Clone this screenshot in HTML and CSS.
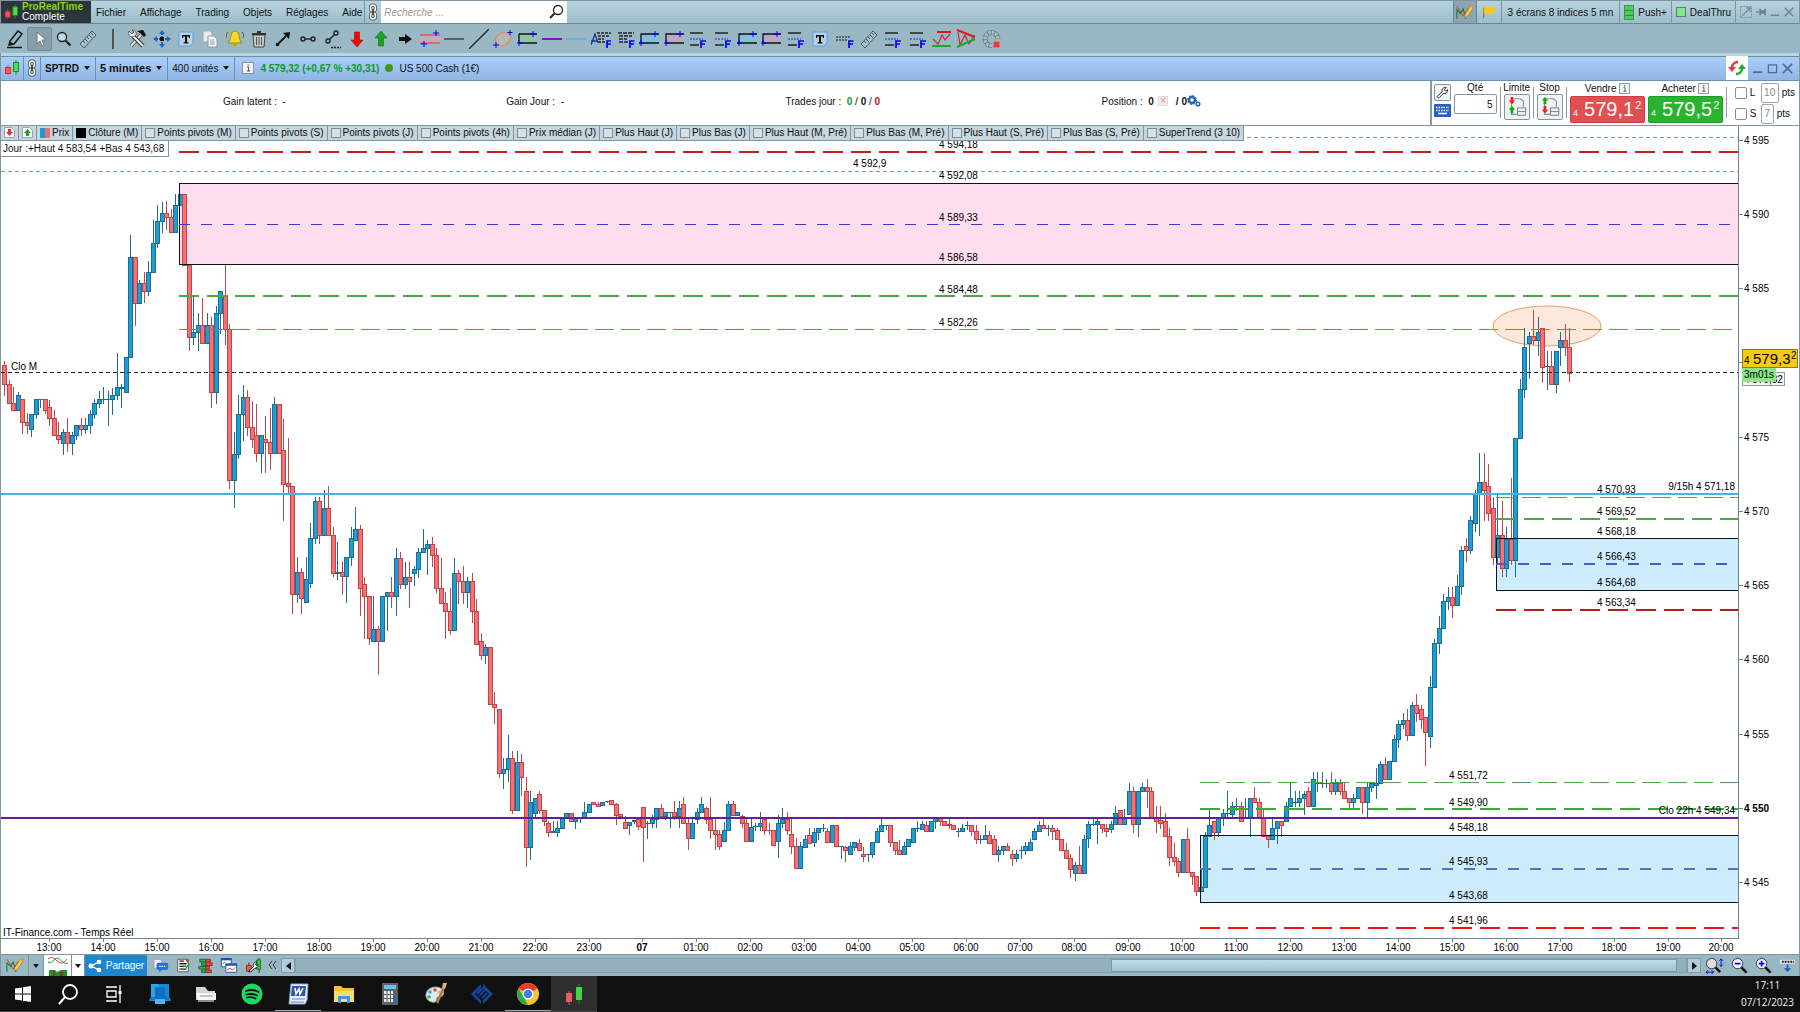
FILE: index.html
```
<!DOCTYPE html>
<html lang="fr">
<head>
    <meta charset="UTF-8">
    <title>ProRealTime Complete</title>
    <link rel="stylesheet" href="styles.css">
</head>
<body>
    <!-- icônes partagées -->
    <svg class="sprite" aria-hidden="true">
        <symbol id="i-candles" viewBox="0 0 16 16"><path d="M4 5v10" stroke="#c55"/><rect x="1.500" y="7.500" width="5" height="6" fill="#f25555" stroke="#c33"/><path d="M12 0v15" stroke="#2a8a2a"/><rect x="9.500" y="2.500" width="5" height="9" fill="#4ade4a" stroke="#2a8a2a"/></symbol>
        <symbol id="i-chain" viewBox="0 0 10 18"><g fill="none" stroke="#444" stroke-width="3"><rect x="2.500" y="2" width="5" height="6" rx="2.500"/><rect x="2.500" y="10" width="5" height="6" rx="2.500"/></g><g fill="none" stroke="#fff" stroke-width="1.500"><rect x="2.500" y="2" width="5" height="6" rx="2.500"/><rect x="2.500" y="10" width="5" height="6" rx="2.500"/></g><path d="M5 6v6" stroke="#444" stroke-width="2"/></symbol>
        <symbol id="i-search" viewBox="0 0 16 16"><circle cx="10" cy="6" r="4.500" fill="none" stroke="#222" stroke-width="1.300"/><path d="M6.500 9.500 2 14" stroke="#222" stroke-width="2"/></symbol>
        <symbol id="i-pencilchart" viewBox="0 0 20 18"><path d="M1 16V6l4 4 3-5 3 11" fill="none" stroke="#187a36" stroke-width="1.200"/><path d="M1 2l7 11 6-9" fill="none" stroke="#c33"/><path d="M9 15l1-4 6-9 3 2-6 9z" fill="#f9cf48" stroke="#a67a20" stroke-width=".7"/><path d="M16 2l3 2 1-2-2-1.500z" fill="#e88"/></symbol>
        <symbol id="i-flag" viewBox="0 0 18 18"><path d="M3 4v12" stroke="#8a7648" stroke-width="1.500"/><path d="M3 3c4-2 6 2 12-1v8c-5 3-8-1-12 1z" fill="#fdc81e"/></symbol>
        <symbol id="i-pen" viewBox="0 0 20 20"><path d="M4 16l1-4 8-10 4 3-8 10z" fill="none" stroke="#111" stroke-width="1.500"/><path d="M4 16l1.500-3.500 3 2.500z" fill="#111"/><path d="M2 18.500h15" stroke="#111" stroke-width="1.500"/></symbol>
        <symbol id="i-cursor" viewBox="0 0 20 20"><path d="M7 3v12l3-3 2 5 2-1-2-5h4z" fill="#f2f4f5" stroke="#777"/></symbol>
        <symbol id="i-loupe" viewBox="0 0 20 20"><circle cx="8" cy="8" r="4.500" fill="#c6dae2" stroke="#222" stroke-width="1.300"/><path d="M11.500 11.500l5 5" stroke="#222" stroke-width="2.200"/></symbol>
        <symbol id="i-ruler" viewBox="0 0 20 20"><path d="M2 15L14 2l4 4L6 19z" fill="#a9bfc9" stroke="#4d5a60"/><path d="M5 12l2 2M7 10l3 3M9 8l2 2M11 6l3 3M13 4l2 2" stroke="#4d5a60"/></symbol>
        <symbol id="i-bar" viewBox="0 0 20 20"><path d="M10 0v20" stroke="#333" stroke-width="1.500"/></symbol>
        <symbol id="i-tools" viewBox="0 0 20 20"><path d="M4 17L14 6" stroke="#555" stroke-width="4"/><path d="M4 17L14 6" stroke="#e4e4e4" stroke-width="2"/><path d="M10 2l6-1 3 5-2 2-4-4z" fill="#111"/><path d="M6 7l10 10" stroke="#333" stroke-width="4"/><path d="M6 7l10 10" stroke="#eee" stroke-width="2"/><path d="M2 2l3 3 2-2-2-2c3 0 5 2 4 5l-3 2c-3 0-5-2-4-6z" fill="#eee" stroke="#444" stroke-width=".8"/></symbol>
        <symbol id="i-move" viewBox="0 0 20 20"><path d="M10 1l3 4H7zM10 19l3-4H7zM1 10l4-3v6zM19 10l-4-3v6z" fill="#1b63c4"/><path d="M10 4v12M4 10h12" stroke="#1b63c4" stroke-width="2" stroke-dasharray="2 1"/><rect x="8" y="8" width="4" height="4" fill="#111"/></symbol>
        <symbol id="i-text" viewBox="0 0 20 20"><path d="M3 3h14v11l-3 3H3z" fill="#b6d2e2" stroke="#5a9ef0"/><path d="M6 6h8v3h-1l-.5-1.500H11V13l1.500.5v1h-5v-1L9 13V7.500H7.500L7 9H6z" fill="#111"/></symbol>
        <symbol id="i-copy" viewBox="0 0 20 20"><path d="M3 2h7l2 2v9H3z" fill="#e6ebed" stroke="#9aa"/><path d="M8 7h6l3 3v8H8z" fill="#f7f8f8" stroke="#899"/><path d="M10 11h4M10 13h5M10 15h5" stroke="#99a"/></symbol>
        <symbol id="i-bell" viewBox="0 0 20 20"><path d="M10 2c4 0 4 5 5 9l2 3H3l2-3c1-4 1-9 5-9z" fill="#f8d827" stroke="#8a7410" stroke-width=".8"/><circle cx="10" cy="15.500" r="2" fill="#c9a512"/><path d="M3 3C1 5 1 7 2 9M17 3c2 2 2 4 1 6" fill="none" stroke="#665a20"/></symbol>
        <symbol id="i-trash" viewBox="0 0 20 20"><path d="M4 6h12l-1 12H5z" fill="#c8c8c8" stroke="#444"/><path d="M7.500 8v8M10 8v8M12.500 8v8" stroke="#555"/><path d="M3 5h14M8 3h4" stroke="#333" stroke-width="1.800"/></symbol>
        <symbol id="i-arrowne" viewBox="0 0 20 20"><path d="M4 16l9-9" stroke="#111" stroke-width="1.800"/><path d="M17 3l-1 7-6-6z" fill="#111"/><circle cx="4.500" cy="15.500" r="1.800" fill="#111"/></symbol>
        <symbol id="i-segment" viewBox="0 0 20 20"><g fill="none" stroke="#222" stroke-width="1.400"><circle cx="5" cy="10" r="2"/><circle cx="15" cy="10" r="2"/><path d="M7 10h6"/></g></symbol>
        <symbol id="i-ray" viewBox="0 0 20 20"><g fill="none" stroke="#222" stroke-width="1.400"><circle cx="14" cy="4" r="2"/><circle cx="6" cy="12" r="2"/><path d="M7.500 10.500l5-5"/><path d="M9 18.500h10" stroke-dasharray="2 1"/></g></symbol>
        <symbol id="i-down" viewBox="0 0 20 20"><path d="M7.500 3h5v8H16l-6 7-6-7h3.500z" fill="#f00a0a" stroke="#900" stroke-width=".5"/></symbol>
        <symbol id="i-up" viewBox="0 0 20 20"><path d="M7.500 17h5V9H16l-6-7-6 7h3.500z" fill="#18a522" stroke="#060" stroke-width=".5"/></symbol>
        <symbol id="i-right" viewBox="0 0 20 20"><path d="M4 8h6V5l7 5-7 5v-3H4z" fill="#111"/></symbol>
        <symbol id="i-channel" viewBox="0 0 20 20"><path d="M0 6h20v8H0z" fill="#b8b2bd"/><path d="M0 6h20M0 14h20" stroke="#e25566" stroke-width="1.300"/><path d="M16 1v6M13 4h6M4 12v6M1 15h6" stroke="#00f"/></symbol>
        <symbol id="i-hline" viewBox="0 0 20 20"><path d="M0 10h20" stroke="#333" stroke-width="1.300"/></symbol>
        <symbol id="i-diag" viewBox="0 0 20 20"><path d="M0 20L20 0" stroke="#222" stroke-width="1.300"/></symbol>
        <symbol id="i-ellipse" viewBox="0 0 20 20"><ellipse cx="10" cy="10" rx="8" ry="6" transform="rotate(-25 10 10)" fill="#b5b8b4" stroke="#e58a5c" stroke-width="1.200"/><path d="M17 1v5M14.500 3.500h5M3 13v6M0 16h6" stroke="#00f"/></symbol>
        <symbol id="i-greenrect" viewBox="0 0 20 20"><path d="M2 5h18M2 14h18M2 5v9" stroke="#111" stroke-width="1.300"/><path d="M3 6h17v7H3z" fill="#8fc4a4"/><path d="M16 2v6M13 5h6M2 11v6M0 14h5" stroke="#00f"/></symbol>
        <symbol id="i-purple" viewBox="0 0 20 20"><path d="M0 10h20" stroke="#8013c0" stroke-width="2"/></symbol>
        <symbol id="i-cyan" viewBox="0 0 20 20"><path d="M0 10h20" stroke="#45b8ee" stroke-width="1.500"/></symbol>
        <symbol id="i-afib" viewBox="0 0 20 20"><path d="M0 16L4 5l3 9M0 12h6" fill="none" stroke="#123a90" stroke-width="1.300"/><path d="M6 4h14M7 7h12M7 10h6M7 13h8" stroke="#222" stroke-width="1.300" stroke-dasharray="3 1"/><path d="M16 19v-7h4M16 15h4" fill="none" stroke="#00f" stroke-width="1.700"/></symbol>
        <symbol id="i-gfib" viewBox="0 0 20 20"><path d="M3 4h16M4 7h13M4 10h8M4 13h9" stroke="#222" stroke-width="1.400" stroke-dasharray="4 1"/><path d="M15 19v-7h4.500M15 15h4" fill="none" stroke="#00f" stroke-width="1.700"/></symbol>
        <symbol id="i-fib" viewBox="0 0 20 20"><path d="M2 4h13M2 16h9" stroke="#222" stroke-width="1.400"/><path d="M2 10h13" stroke="#22f" stroke-dasharray="2 1"/><path d="M13 19v-7h5M13 15h4" fill="none" stroke="#00f" stroke-width="1.700"/></symbol>
        <symbol id="i-dfib" viewBox="0 0 20 20"><path d="M2 8h14M2 11h12" stroke="#444" stroke-width="1.600" stroke-dasharray="2 1"/><path d="M15 19v-7h4.500M15 15h4" fill="none" stroke="#00f" stroke-width="1.700"/></symbol>
        <symbol id="i-bluerect" viewBox="0 0 20 20"><path d="M2 5h18v9H2z" fill="#86bfdc"/><path d="M20 5H2v9h18M2 14H0" fill="none" stroke="#111" stroke-width="1.300"/><path d="M16 2v6M13 5h6M2 11v6M0 14h5" stroke="#00f"/></symbol>
        <symbol id="i-pinkrect" viewBox="0 0 20 20"><path d="M2 5h18v9H2z" fill="#b9a8c6"/><path d="M20 5H2v9h18" fill="none" stroke="#111" stroke-width="1.300"/><path d="M16 2v6M13 5h6M2 11v6M0 14h5" stroke="#00f"/></symbol>
        <symbol id="i-range" viewBox="0 0 20 20"><path d="M1 10l5 5 4-9 3 5 5-6" fill="none" stroke="#b33" stroke-width="1.200"/><path d="M5 3h14" stroke="#e01818" stroke-width="2"/><path d="M0 17h19" stroke="#1aa82a" stroke-width="2"/></symbol>
        <symbol id="i-wedge" viewBox="0 0 20 20"><path d="M2 3l2 13 5-10 4 9 5-8" fill="none" stroke="#b33" stroke-width="1.200"/><path d="M1 1l18 7" stroke="#e01818" stroke-width="2"/><path d="M1 18l18-8" stroke="#1aa82a" stroke-width="2"/></symbol>
        <symbol id="i-arc" viewBox="0 0 20 20"><path d="M11 16.500a6.500 6.500 0 1 1 6-6.500" fill="none" stroke="#6d7a80" stroke-width="5"/><path d="M11 16.500a6.500 6.500 0 1 1 6-6.500" fill="none" stroke="#a9bfc9" stroke-width="3.500" stroke-dasharray="2.500 1"/><path d="M13 13l5 5M18 13l-5 5" stroke="#e33" stroke-width="3"/></symbol>
        <symbol id="i-info" viewBox="0 0 12 12"><rect x=".5" y=".5" width="11" height="11" fill="#eef3f6" stroke="#8a979e"/><path d="M5 5h1.500v4M5 9h3" fill="none" stroke="#555"/><path d="M5.500 2.500h1.500v1H5.500z" fill="#555"/></symbol>
        <symbol id="i-refresh" viewBox="0 0 18 18"><path d="M4 9c0-4 3-6 6-6" fill="none" stroke="#e43b3b" stroke-width="2.500"/><path d="M0 8h8l-4 5z" fill="#e43b3b"/><path d="M14 9c0 4-3 6-6 6" fill="none" stroke="#19ae2f" stroke-width="2.500"/><path d="M10 10h8l-4-5z" fill="#19ae2f"/></symbol>
        <symbol id="i-min" viewBox="0 0 12 12"><path d="M1 10h10" stroke="currentColor" stroke-width="1.800"/></symbol>
        <symbol id="i-max" viewBox="0 0 12 12"><path d="M1.500 2h9v8.500h-9z" fill="none" stroke="currentColor" stroke-width="1.400"/></symbol>
        <symbol id="i-close" viewBox="0 0 12 12"><path d="M1 1l10 10M11 1L1 11" stroke="currentColor" stroke-width="1.800"/></symbol>
        <symbol id="i-pin" viewBox="0 0 12 12"><path d="M0 6h4" stroke="currentColor" stroke-width="1.500"/><path d="M4 2h2v2h4V2h2v8h-2V8H6v2H4z" fill="currentColor"/></symbol>
        <symbol id="i-wrench" viewBox="0 0 14 14"><path d="M1.500 11l5-4.500C6 3 8 1 11 1.500L9 4l1 1.500L12.500 4c.5 3-2 4.500-4.500 4l-4.500 4.500c-1 .8-2.800-.5-2-1.500z" fill="#fff" stroke="#222"/></symbol>
        <symbol id="i-keyboard" viewBox="0 0 17 13"><rect width="17" height="13" rx="1" fill="#2a5fc4"/><path d="M2 3.500h13M2 6.500h13" stroke="#fff" stroke-width="1.500" stroke-dasharray="1.500 1"/><path d="M4 9.500h9" stroke="#fff" stroke-width="1.500"/></symbol>
        <symbol id="i-limit" viewBox="0 0 24 24"><path d="M8 3h8l3 3v6M6 3v17h7" fill="none" stroke="#8a969c" stroke-width="1.300"/><path d="M5 1h3v4h2l-3.500 4L3 5h2z" fill="#e22"/><path d="M5 19h3v-4h2l-3.500-4L3 15h2z" fill="#1a1"/><path d="M12.500 13h9v8h-9zM12.500 17h9" fill="#f2f2f2" stroke="#6c787e"/></symbol>
        <symbol id="i-stop" viewBox="0 0 24 24"><path d="M8 3h8l3 3v6M6 3v17h7" fill="none" stroke="#8a969c" stroke-width="1.300"/><path d="M5 9h3V5h2L6.500 1 3 5h2z" fill="#1a1"/><path d="M5 11h3v4h2l-3.500 4L3 15h2z" fill="#e22"/><path d="M12.500 13h9v8h-9zM12.500 17h9" fill="#f2f2f2" stroke="#6c787e"/></symbol>
        <symbol id="i-gears" viewBox="0 0 14 12"><circle cx="5" cy="5" r="3" fill="none" stroke="#2a68b4" stroke-width="2.500"/><circle cx="5" cy="5" r="4.500" fill="none" stroke="#2a68b4" stroke-dasharray="2 1.500"/><circle cx="11" cy="9" r="1.800" fill="none" stroke="#2a68b4" stroke-width="1.500"/></symbol>
        <symbol id="i-wave" viewBox="0 0 20 20"><path d="M0 3c4-3 6-1 9 2s6 3 10-2" fill="none" stroke="#d33"/><path d="M0 6c4 3 6-4 9-4s6 7 11 5" fill="none" stroke="#1a9a30"/><path d="M1 14h6l2 2 4-2h6v6H1z" fill="#0e9a2c"/><path d="M5 15h2v5H5zM12 16h3v4h-3z" fill="#b12020"/></symbol>
        <symbol id="i-share" viewBox="0 0 14 14"><g fill="#fff"><circle cx="3" cy="7" r="2.500"/><circle cx="11" cy="3" r="2.300"/><circle cx="11" cy="11" r="2.300"/></g><path d="M11 3L3 7l8 4" fill="none" stroke="#fff" stroke-width="1.300"/></symbol>
        <symbol id="i-chat" viewBox="0 0 18 18"><path d="M1 2h7l2 2v8H1z" fill="#eef" stroke="#999"/><rect x="4" y="6" width="13" height="8" rx="2" fill="#2b6fd6"/><path d="M7 13v4l4-4z" fill="#2b6fd6"/><path d="M7 10h8" stroke="#fff" stroke-width="1.500" stroke-dasharray="1.500 1"/></symbol>
        <symbol id="i-news" viewBox="0 0 18 18"><path d="M3 2h12v14H3z" fill="#f4f4f4" stroke="#555"/><path d="M5 4h5M5 7h8M5 10h6M5 13h8" stroke="#222" stroke-width="1.500"/><path d="M11 2h4v5z" fill="#d33"/><path d="M11 9l2 2 3-4" stroke="#1a1" fill="none" stroke-width="1.500"/></symbol>
        <symbol id="i-book" viewBox="0 0 18 18"><path d="M2 2h7v3H2zM4 6h5v3H4zM1 10h8v3H1zM4 14h5v3H4z" fill="#2cb43c" stroke="#164"/><path d="M9 2h5v3H9zM9 6h7v3H9zM9 10h4v3H9zM9 14h6v3H9z" fill="#ea4a4a" stroke="#922"/></symbol>
        <symbol id="i-windows" viewBox="0 0 20 18"><path d="M1.500 1.500h11v9h-11z" fill="#fff" stroke="#1a4fae"/><path d="M1 2h12" stroke="#1a4fae" stroke-width="2.500"/><path d="M6.500 7.500h12v9h-12z" fill="#fff" stroke="#1a4fae"/><path d="M6 8h13" stroke="#1a4fae" stroke-width="2.500"/><path d="M8 14l3-2 3 2 3-3" fill="none" stroke="#d33"/><path d="M3 7l3-2" stroke="#1a1"/></symbol>
        <symbol id="i-cfg" viewBox="0 0 18 18"><path d="M15 1v16M4 6v10" stroke="#333"/><path d="M12.500 3h4v10h-4z" fill="#38d048" stroke="#171"/><path d="M1.500 9h5v6h-5z" fill="#f25555" stroke="#a22"/><path d="M4 15l5-5c-1-3 1-5 4-5l-2 3 1 1 2-1c0 3-2 4-4 4l-4 4z" fill="#fff" stroke="#111"/></symbol>
        <symbol id="i-zoomfit" viewBox="0 0 20 18"><circle cx="7" cy="7" r="5.500" fill="#ddd" stroke="#333"/><path d="M11 11l5 5" stroke="#111" stroke-width="2.500"/><path d="M17 2v8M15 4l2-2 2 2M15 8l2 2 2-2M1 16h8M3 14l-2 2 2 2M7 14l2 2-2 2" stroke="#00e" fill="none"/></symbol>
        <symbol id="i-zoomout" viewBox="0 0 18 18"><circle cx="7" cy="7" r="5.500" fill="#f4f4f4" stroke="#333"/><path d="M11 11l5.500 5.500" stroke="#111" stroke-width="2.800"/><path d="M4 7h6" stroke="#00e" stroke-width="1.800"/></symbol>
        <symbol id="i-zoomin" viewBox="0 0 18 18"><circle cx="7" cy="7" r="5.500" fill="#f4f4f4" stroke="#333"/><path d="M11 11l5.500 5.500" stroke="#111" stroke-width="2.800"/><path d="M4 7h6M7 4v6" stroke="#00e" stroke-width="1.800"/></symbol>
        <symbol id="i-dock" viewBox="0 0 18 18"><path d="M1 3h16v4H1z" fill="#eee"/><path d="M3 5h13" stroke="#222" stroke-width="2" stroke-dasharray="2 1"/><path d="M8 8h2v4h3l-4 4-4-4h3z" fill="#1c62c8"/></symbol>
    </svg>

    <div class="app">
        <header class="menubar">
            <div class="logo">
                <svg width="15" height="16"><use href="#i-candles"/></svg>
                <div><b>ProRealTime</b><span>Complete</span></div>
            </div>
            <nav>
                <a href="#">Fichier</a><a href="#">Affichage</a><a href="#">Trading</a><a href="#">Objets</a><a href="#">Réglages</a><a href="#">Aide</a>
            </nav>
            <span class="chain"><svg width="10" height="18"><use href="#i-chain"/></svg></span>
            <label class="search">
                <input type="text" placeholder="Recherche ..." aria-label="Recherche">
                <svg width="16" height="16"><use href="#i-search"/></svg>
            </label>
            <div class="status">
                <button class="tool on" aria-label="Analyse"><svg width="18" height="17"><use href="#i-pencilchart"/></svg></button>
                <button class="tool" aria-label="Alertes"><svg width="16" height="16"><use href="#i-flag"/></svg></button>
                <span class="cell wide">3 écrans 8 indices 5 mn</span>
                <span class="cell"><i class="led stack"></i>Push+</span>
                <span class="cell"><i class="led"></i>DealThru</span>
                <span class="cell wins">
                    <svg width="12" height="12"><rect x=".5" y=".5" width="11" height="11" fill="none" stroke="#7d929c" stroke-dasharray="2 1"/><path d="M2 10l8-8M6 2h4v4" stroke="#7d929c" stroke-width="1.500" fill="none"/></svg>
                    <svg width="10" height="10"><use href="#i-pin"/></svg>
                    <svg width="10" height="10"><use href="#i-min"/></svg>
                    <svg width="10" height="10"><use href="#i-close"/></svg>
                </span>
            </div>
        </header>

        <div class="toolbar" id="toolbar"></div>

        <div class="titlebar">
            <span class="cell"><svg width="16" height="16"><use href="#i-candles"/></svg></span>
            <span class="cell"><svg width="10" height="18"><use href="#i-chain"/></svg></span>
            <button class="cell drop"><b>SPTRD</b></button>
            <button class="cell drop period"><b>5 minutes</b></button>
            <button class="cell drop">400 unités</button>
            <div class="quote">
                <svg width="12" height="12"><use href="#i-info"/></svg>
                <b class="green">4 579,32 (+0,67 % +30,31)</b>
                <i class="dot"></i>
                <span>US 500 Cash (1€)</span>
            </div>
            <button class="refresh" aria-label="Actualiser"><svg width="18" height="18"><use href="#i-refresh"/></svg></button>
            <div class="winbtns">
                <svg width="11" height="11"><use href="#i-min"/></svg>
                <svg width="11" height="11"><use href="#i-max"/></svg>
                <svg width="11" height="11"><use href="#i-close"/></svg>
            </div>
        </div>

        <section class="panel">
            <div class="gains">
                <span>Gain latent : &nbsp;-</span>
                <span>Gain Jour : &nbsp;-</span>
                <span>Trades jour : &nbsp;<b class="green">0</b> / <b>0</b> / <b class="red">0</b></span>
                <span class="pos">Position :  <b>0</b><i class="mini">×</i><b>/ 0</b><svg width="14" height="12"><use href="#i-gears"/></svg></span>
            </div>
            <div class="order">
                <div class="col tools">
                    <button aria-label="Options"><svg width="13" height="13"><use href="#i-wrench"/></svg></button>
                    <svg width="17" height="13"><use href="#i-keyboard"/></svg>
                </div>
                <div class="col qty"><label for="qty">Qté</label><input id="qty" type="text" value="5"></div>
                <i class="sep"></i>
                <div class="col type"><span>Limite</span><button aria-label="Limite"><svg width="22" height="22"><use href="#i-limit"/></svg></button></div>
                <i class="sep"></i>
                <div class="col type"><span>Stop</span><button aria-label="Stop"><svg width="22" height="22"><use href="#i-stop"/></svg></button></div>
                <i class="sep"></i>
                <div class="col side"><span>Vendre <svg width="11" height="11"><use href="#i-info"/></svg></span><button class="price sell"><small>4</small>579,1<sup>2</sup></button></div>
                <div class="col side"><span>Acheter <svg width="11" height="11"><use href="#i-info"/></svg></span><button class="price buy"><small>4</small>579,5<sup>2</sup></button></div>
                <i class="sep"></i>
                <div class="col stops">
                    <div><input type="checkbox" id="ckL"><label for="ckL">L</label><input class="pts" type="text" value="10" aria-label="Limite en points">pts</div>
                    <div><input type="checkbox" id="ckS"><label for="ckS">S</label><input class="pts short" type="text" value="7" aria-label="Stop en points">pts</div>
                </div>
            </div>
        </section>

        <main class="chart">
            <svg id="plot"></svg>
            <div class="legend">
                <span class="ico"><svg width="11" height="11"><path d="M.5.5h7l3 3v7H.500z" fill="#fff" stroke="#99a5ab"/><path d="M4 2h3v3h2L5.500 9 2 5h2z" fill="#d33"/></svg></span>
                <span class="ico"><svg width="11" height="11"><path d="M.5.5h7l3 3v7H.500z" fill="#fff" stroke="#99a5ab"/><path d="M4 9h3V6h2L5.500 2 2 6h2z" fill="#1a1"/></svg></span>
                <span><i class="sw duo"></i>Prix</span>
                <span><i class="sw"></i>Clôture (M)</span>
                <label><input type="checkbox">Points pivots (M)</label>
                <label><input type="checkbox">Points pivots (S)</label>
                <label><input type="checkbox">Points pivots (J)</label>
                <label><input type="checkbox">Points pivots (4h)</label>
                <label><input type="checkbox">Prix médian (J)</label>
                <label><input type="checkbox">Plus Haut (J)</label>
                <label><input type="checkbox">Plus Bas (J)</label>
                <label><input type="checkbox">Plus Haut (M, Pré)</label>
                <label><input type="checkbox">Plus Bas (M, Pré)</label>
                <label><input type="checkbox">Plus Haut (S, Pré)</label>
                <label><input type="checkbox">Plus Bas (S, Pré)</label>
                <label><input type="checkbox">SuperTrend (3 10)</label>
            </div>
            <div class="day">Jour :+Haut 4 583,54 +Bas 4 543,68</div>
        </main>

        <footer class="bottombar">
            <button class="b28" aria-label="Dessin"><svg width="18" height="17"><use href="#i-pencilchart"/></svg></button>
            <button class="arrow" aria-label="Menu dessin"></button>
            <button class="b28 white" aria-label="Indicateurs"><svg width="20" height="20"><use href="#i-wave"/></svg></button>
            <button class="arrow white" aria-label="Menu indicateurs"></button>
            <button class="share"><svg width="14" height="14"><use href="#i-share"/></svg>Partager</button>
            <div class="mini-icons">
                <svg width="16" height="17"><use href="#i-chat"/></svg>
                <svg width="16" height="17"><use href="#i-news"/></svg>
                <svg width="16" height="17"><use href="#i-book"/></svg>
                <svg width="18" height="17"><use href="#i-windows"/></svg>
                <svg width="17" height="17"><use href="#i-cfg"/></svg>
                <svg width="9" height="9"><path d="M4 0L1 4l3 4M8 0L5 4l3 4" fill="none" stroke="#333"/></svg>
            </div>
            <button class="scroll-btn" aria-label="Gauche"><svg width="5" height="8"><path d="M5 0v8L0 4z" fill="#111"/></svg></button>
            <div class="track"><div class="thumb"></div></div>
            <button class="scroll-btn" aria-label="Droite"><svg width="5" height="8"><path d="M0 0v8l5-4z" fill="#111"/></svg></button>
            <div class="zooms">
                <svg width="19" height="17"><use href="#i-zoomfit"/></svg>
                <svg width="17" height="17"><use href="#i-zoomout"/></svg>
                <svg width="17" height="17"><use href="#i-zoomin"/></svg>
                <svg width="17" height="17"><use href="#i-dock"/></svg>
            </div>
        </footer>
    </div>

    <div class="taskbar">
        <button aria-label="Démarrer"><svg width="16" height="16"><path d="M0 2.500l7-1v6H0zM8 1.300L16 0v7.500H8zM0 8.500h7v6l-7-1zM8 8.500h8V16l-8-1.300z" fill="#fff"/></svg></button>
        <button aria-label="Rechercher"><svg width="22" height="22"><circle cx="13" cy="9" r="7" fill="none" stroke="#fff" stroke-width="1.800"/><path d="M8 14l-6 7" stroke="#fff" stroke-width="2"/></svg></button>
        <button aria-label="Vue des tâches"><svg width="16" height="18"><path d="M1 2h9M1 6h9v6H1zM1 16h9M1 1v2M10 1v2M1 15v2M10 15v2M14 0v18" fill="none" stroke="#fff" stroke-width="1.300"/><path d="M12.500 6h3v3h-3z" fill="#fff"/></svg></button>
        <button aria-label="Bureau"><svg width="22" height="22"><path d="M2 1h18v13l2 4H0l2-4z" fill="#1687d8"/><path d="M2 1h8v13H2z" fill="#2aa3ea"/><path d="M0 17l2-3h18l2 3z" fill="#1478c6"/><path d="M6 4h10v17H6z" fill="#0f6fc0"/><path d="M6 16h10v5H6z" fill="#4db5ee"/></svg></button>
        <button aria-label="Imprimante"><svg width="22" height="18"><path d="M1 2h9l3 4h7v9H1z" fill="#d5d5d5"/><path d="M1 8h20v7H3z" fill="#f5f5f5"/><path d="M3 15h16v2H3z" fill="#888"/><path d="M5 11h13" stroke="#999"/></svg></button>
        <button aria-label="Spotify"><svg width="22" height="22"><circle cx="11" cy="11" r="10.500" fill="#1ed760"/><path d="M5 8c4-1.500 9-1 12.500 1M5.500 11.500c4-1 7.500-.5 10.500 1M6 14.500c3-.8 6-.5 8.500 1" fill="none" stroke="#111" stroke-width="1.800" stroke-linecap="round"/></svg></button>
        <button class="open" aria-label="Word"><svg width="22" height="22"><path d="M4 1h17l-1 16-2 4H2z" fill="#e8eefb" stroke="#8aa5d8"/><path d="M5 16h13M4 19h13" stroke="#5b85cf"/><path d="M5 3h14l-1 10H4z" fill="#2b57ac"/><path d="M8 5l1 6 3-5 1 5 3-6" fill="none" stroke="#fff" stroke-width="1.600"/></svg></button>
        <button aria-label="Explorateur"><svg width="22" height="22"><path d="M1 3h7l2 2h11v14H1z" fill="#f7bc3c"/><path d="M1 8h20v11H1z" fill="#ffd877"/><path d="M5 20v-7h12v7h-3v-4H8v4z" fill="#3e9be0"/></svg></button>
        <button aria-label="Calculatrice"><svg width="18" height="22"><path d="M1 0h16v22H1z" fill="#5a6368"/><path d="M3 2h12v4H3z" fill="#62c4ec"/><path d="M3 9.500h9M3 13.500h9M3 17.500h9" stroke="#e6e6e6" stroke-width="3" stroke-dasharray="2.500 1"/><path d="M13 12h2v7h-2z" fill="#1a6fc0"/></svg></button>
        <button aria-label="Paint"><svg width="24" height="22"><path d="M11 4c7 0 10 4 8 8-2 3-5 0-6 3s-1 5-5 4C-1 17 0 5 11 4z" fill="#dfe8ee" stroke="#8fa6b5"/><circle cx="6" cy="9" r="1.800" fill="#3ba3e8"/><circle cx="11" cy="7" r="1.800" fill="#e94f3d"/><circle cx="5" cy="14" r="1.800" fill="#48b04a"/><circle cx="15" cy="9" r="1.600" fill="#f3b62b"/><path d="M13 20L20 4" stroke="#b77a37" stroke-width="2.500"/><path d="M19 0h4l-2 6-3-1z" fill="#e3b56d"/></svg></button>
        <button aria-label="IG"><svg width="22" height="22"><path d="M10 1L0 11l10 10v-4l-6-6 6-6zM12 1l10 10-10 10v-4l6-6-6-6z" fill="#17439b"/><path d="M6 11l8-8M8 13l6-6M11 15l5-5" stroke="#17439b" stroke-width="2"/></svg></button>
        <button class="open" aria-label="Chrome"><svg width="22" height="22"><circle cx="11" cy="11" r="11" fill="#f7c52c"/><path d="M11 11L1.500 5.500A11 11 0 0 1 20.500 5.500z" fill="#e33b2e"/><path d="M1.500 5.500L7 14l4 8A11 11 0 0 1 1.500 5.500z" fill="#2da94f"/><circle cx="11" cy="11" r="5.500" fill="#fff"/><circle cx="11" cy="11" r="4.300" fill="#3f7fee"/></svg></button>
        <button class="active" aria-label="ProRealTime"><svg width="20" height="22"><path d="M5 8v14" stroke="#c55"/><path d="M15 1v20" stroke="#2a8a2a"/><path d="M2 10h6v9H2z" fill="#e85c60"/><path d="M12 4h6v13h-6z" fill="#3fd648"/></svg></button>
        <div class="clock"><span>17:11</span><span>07/12/2023</span></div>
    </div>

    <script src="chart.js"></script>
</body>
</html>
```

FILE: styles.css
```
* { box-sizing: border-box; }
body { margin: 0; height: 100vh; display: flex; flex-direction: column; font-family: "Liberation Sans", Arial, sans-serif; font-size: 10px; color: #111; overflow: hidden; background: #fff; }
button, input { font: inherit; color: inherit; }
button { border: 0; padding: 0; background: none; display: flex; align-items: center; justify-content: center; }
a { color: inherit; text-decoration: none; }
svg { display: block; flex: none; }
.sprite { position: absolute; width: 0; height: 0; }
.green { color: #0c9a20; }
.red { color: #c01818; }

.app { flex: 1; min-height: 0; display: flex; flex-direction: column; border: 1px solid #7f959f; border-bottom: 0; }

/* menu */
.menubar { height: 23px; display: flex; background: linear-gradient(#b6d3df, #9dbdca); border-bottom: 1px solid #6d8691; }
.logo { width: 90px; display: flex; align-items: center; gap: 3px; padding-left: 3px; background: #2c353b; color: #fff; }
.logo b, .logo span { display: block; line-height: 10px; }
.logo b { color: #86d41c; }
nav { display: flex; align-items: center; gap: 14px; padding: 0 2px 0 5px; }
.chain { width: 17px; display: flex; align-items: center; justify-content: center; border-left: 1px solid #7c949f; }
.search { width: 186px; display: flex; align-items: center; background: #fff; padding: 0 3px; }
.search input { flex: 1; min-width: 0; border: 0; outline: 0; padding: 0; }
.search input::placeholder { color: #999; font-style: italic; }
.status { margin-left: auto; display: flex; }
.status .tool { width: 24px; }
.status .on { background: #8ba6b2; border-left: 1px solid #6d8691; border-right: 1px solid #6d8691; }
.cell { display: flex; align-items: center; border-left: 1px solid #7c949f; padding: 0 4px; gap: 4px; }
.status .wide { padding: 0 6px; }
.wins { padding-right: 5px; color: #6d828c; }
.led { width: 10px; height: 10px; background: #86e48c; border: 1px solid #4f8a60; }
.stack { height: 15px; background: repeating-linear-gradient(#47cf52 0 4px, #2c8c39 4px 5px); }

/* outils de dessin */
.toolbar { height: 29px; flex: none; display: grid; grid-template-columns: repeat(41, minmax(0, 1fr)); width: 1002px; padding-left: 2px; align-items: center; background: #9ab8c4; box-shadow: 0 0 0 100vmax #9ab8c4; clip-path: inset(0 -100vmax 0 -2px); }
.toolbar button { height: 24px; }
.toolbar .on { background: #86a0ab; border: 1px solid #728b96; border-radius: 2px; }

/* titre du graphique */
.titlebar { height: 28px; flex: none; display: flex; border-top: 3px solid #bdd5de; border-bottom: 1px solid #6c8fb5; background: linear-gradient(#abcffa, #8fb6e4); box-shadow: inset 0 1px #6c8fa8; }
.titlebar .cell { padding: 0 3px; border-left: 0; border-right: 1px solid #6c8fb5; }
.titlebar .drop { padding: 0 5px 0 4px; gap: 5px; }
.drop::after, .arrow::after { content: ""; border: 3px solid transparent; border-top: 4px solid #111; border-bottom: 0; }
.period { font-size: 11px; }
.quote { display: flex; align-items: center; gap: 6px; padding-left: 7px; flex: 1; }
.dot { width: 8px; height: 8px; border-radius: 50%; background: #3f9a10; }
.refresh { width: 22px; background: #fff; }
.winbtns { display: flex; align-items: center; gap: 4px; padding: 0 6px 0 4px; color: #4b6d9c; }

/* bandeau ordres */
.panel { height: 45px; flex: none; display: flex; background: #fff; border-bottom: 1px solid #7f959f; }
.gains { flex: 1; display: grid; grid-template-columns: 284fr 280fr 317fr 329fr; padding: 0 0 4px 222px; align-items: center; }
.pos { display: flex; align-items: center; white-space: pre; }
.mini { width: 10px; height: 10px; margin: 0 8px 0 4px; line-height: 8px; text-align: center; border: 1px solid #ddd; background: #fdeaea; color: #e88; }
.order { display: flex; gap: 3px; padding-left: 2px; border-left: 2px solid #8b9aa1; }
.col { display: flex; flex-direction: column; align-items: center; line-height: 13px; white-space: nowrap; }
.tools { padding-top: 3px; gap: 3px; }
.tools button { width: 17px; height: 17px; border: 1px solid #8795a0; border-radius: 2px; background: #f2f5f6; }
.qty { width: 43px; }
.qty input { width: 100%; height: 20px; border: 1px solid #8795a0; border-radius: 2px; text-align: right; padding: 0 3px; }
.sep { width: 1px; height: 31px; margin-top: 6px; background: #8b9aa1; }
.type { width: 26px; }
.type button { width: 26px; height: 26px; border: 1px solid #8795a0; border-radius: 2px; background: #f0f3f4; }
.side { width: 75px; }
.side span { display: flex; align-items: center; gap: 2px; line-height: 15px; }
.price { width: 100%; height: 27px; border-radius: 2px; color: #fff; font-size: 20px; align-items: baseline; line-height: 25px; }
.price small { font-size: 9px; margin-right: 6px; }
.price sup { font-size: 11px; line-height: 17px; align-self: flex-start; margin-left: 1px; }
.sell { background: #e24f52; border: 1px solid #ca3f42; }
.buy { background: #2ab32e; border: 1px solid #1f9c24; }
.stops { padding: 1px 4px 0 5px; align-items: flex-start; gap: 0; }
.stops div { display: flex; align-items: center; height: 21px; gap: 3px; }
.stops label { width: 8px; }
.stops input[type=checkbox], .legend input { appearance: none; margin: 0; width: 12px; height: 12px; border: 1px solid #7f8e96; background: #fff; }
.stops input[type=checkbox] { border-radius: 2px; }
.stops .pts { width: 18px; height: 20px; padding: 0; text-align: center; border: 1px solid #9aa6ad; border-radius: 2px; color: #888; }
.stops .short { width: 13px; }

/* graphique */
.chart { flex: 1; min-height: 0; position: relative; }
#plot { width: 100%; height: 100%; font-size: 10px; }
.legend { position: absolute; top: 0; left: 0; display: flex; height: 15px; background: #c5d6de; border-bottom: 1px solid #7f959f; white-space: nowrap; line-height: 12px; }
.legend > * { display: flex; align-items: center; gap: 2px; padding: 0 3px 1px; border-right: 1px solid #7f959f; }
.legend input { width: 10px; height: 10px; background: #d5e1e7; }
.sw { width: 10px; height: 10px; background: #000; }
.duo { background: linear-gradient(90deg, #1a9bd0 50%, #f36c6c 50%); }
.day { position: absolute; top: 15px; left: 0; height: 16px; line-height: 15px; padding: 0 4px 0 2px; background: #fff; border: 1px solid #7f959f; border-width: 0 1px 1px 0; }

/* barre du bas */
.bottombar { height: 22px; flex: none; display: flex; background: #9ab8c4; border-top: 1px solid #7f959f; }
.b28 { width: 28px; border-right: 1px solid #7c949f; overflow: hidden; }
.arrow { width: 15px; border-right: 1px solid #7c949f; }
.white { background: #fff; width: 28px; }
.arrow.white { width: 13px; }
.share { width: 62px; background: #1f87d0; color: #fff; gap: 4px; }
.mini-icons { width: 134px; display: flex; align-items: center; justify-content: space-between; padding: 0 4px 0 6px; }
.scroll-btn { width: 14px; margin: 3px 0; background: #b3cdd8; border: 1px solid #7f9aa6; }
.track { flex: 1; display: flex; margin: 3px 0; padding-right: 9px; background: #93b0bc; border: 1px solid #84a0ab; }
.thumb { margin-left: 59%; flex: 1; background: linear-gradient(#bfdde7, #9fc3d1); border: 1px solid #7f9aa6; }
.zooms { display: flex; align-items: center; gap: 7px; padding: 0 3px 0 4px; }

/* barre des tâches */
.taskbar { height: 36px; flex: none; display: flex; background: #101010; }
.taskbar button { width: 46px; border-bottom: 1px solid #444; }
.taskbar button:first-child { width: 45px; }
.taskbar .open { box-shadow: inset 0 -1px #9ab; }
.taskbar .active { background: #2f2f2f; }
.clock { margin-left: auto; padding-right: 6px; display: flex; flex-direction: column; justify-content: center; align-items: center; color: #f0f0f0; font-family: "Open Sans", sans-serif; line-height: 17px; }
```

FILE: chart.js
```
// barre d'outils
const tools = ['pen', 'cursor', 'loupe', 'ruler', 'bar', 'tools', 'move', 'text', 'copy', 'bell', 'trash', 'arrowne', 'segment', 'ray',
    'down', 'up', 'right', 'channel', 'hline', 'diag', 'ellipse', 'greenrect', 'purple', 'cyan', 'afib', 'gfib', 'bluerect', 'pinkrect',
    'fib', 'fib', 'bluerect', 'pinkrect', 'fib', 'text', 'dfib', 'ruler', 'fib', 'fib', 'range', 'wedge', 'arc'];
document.getElementById('toolbar').innerHTML = tools.map(t =>
    `<button class="${t === 'cursor' ? 'on' : ''}" aria-label="${t}"><svg width="20" height="20"><use href="#i-${t}"/></svg></button>`).join('');

// bougies 5 min : sens, mèche haute, haut du corps, bas du corps, mèche basse
const bars = `d 361 365 384 395,d 380 384 403 403,d 387 403 410 410,u 392 395 410 410,d 399 399 422 433,d 413 422 425 433,u 414 414 429 436,u 399 399 414 418,u 399 399 399 407,d 399 399 410 413,
d 400 407 418 425,d 410 418 435 435,d 422 435 439 443,u 429 432 443 454,d 418 432 443 451,u 432 435 443 454,u 425 425 435 439,d 418 425 429 435,u 418 425 429 433,u 410 414 425 433,
u 399 403 414 418,u 391 399 403 407,u 387 399 399 403,u 391 399 399 425,u 388 395 399 414,u 353 387 395 399,u 384 387 388 407,u 357 357 392 392,u 235 257 357 357,d 257 257 303 325,
u 280 283 303 303,d 272 283 291 302,u 261 272 291 295,u 220 243 272 272,u 205 221 243 247,u 202 213 221 232,d 201 213 217 229,d 209 217 232 232,u 194 205 232 232,u 194 194 205 205,
d 194 194 265 265,d 265 265 337 350,u 295 332 337 344,u 313 325 332 350,d 298 325 343 343,u 313 325 343 343,d 317 325 392 407,u 306 313 392 403,u 291 291 313 333,d 265 295 329 344,
d 324 329 480 488,u 432 454 480 507,u 395 414 454 458,u 385 397 414 440,d 390 397 427 435,d 401 427 439 447,d 404 435 453 461,u 435 435 453 472,d 416 439 442 472,d 408 442 453 469,
u 397 404 453 453,d 404 404 453 453,d 419 450 484 520,d 438 483 486 492,d 486 486 594 613,u 557 572 594 602,d 568 572 598 613,u 557 579 602 602,u 523 538 583 587,u 497 501 538 543,
d 497 501 535 543,u 490 508 535 535,d 486 508 535 535,d 527 535 573 576,u 542 572 573 579,d 561 572 576 594,u 557 557 576 602,u 527 538 557 565,u 507 529 540 540,d 525 529 588 615,
d 577 584 596 638,d 596 596 638 644,u 596 629 641 641,d 626 629 641 674,u 596 596 641 641,u 592 592 596 630,d 577 592 596 607,u 548 558 596 615,d 552 558 584 588,u 562 577 584 588,
d 562 577 581 607,u 566 569 573 585,u 548 552 569 577,u 529 548 552 552,u 540 544 548 574,d 537 544 555 566,d 548 555 588 592,d 558 588 603 603,d 592 603 611 638,d 588 611 630 634,
u 558 573 630 630,d 570 573 581 603,d 566 581 592 603,u 577 581 592 607,d 573 581 611 622,d 599 611 644 644,d 633 641 655 659,u 644 647 655 663,d 647 647 704 704,d 692 704 707 723,
d 709 709 773 777,u 758 769 773 788,u 735 758 769 781,d 751 758 810 813,u 751 762 810 810,d 754 762 777 795,d 777 791 847 866,u 791 802 847 859,u 798 798 813 817,d 791 794 810 813,
d 810 810 821 825,d 821 823 832 836,u 821 831 832 832,u 821 828 832 836,u 818 818 828 828,u 813 813 818 818,d 813 813 821 821,u 818 818 821 828,u 818 818 818 822,u 802 812 817 817,
u 804 804 812 812,d 802 802 804 804,d 802 804 806 806,u 802 802 805 805,u 801 801 801 802,d 800 800 804 804,d 803 804 815 824,d 814 814 816 816,d 816 822 828 828,u 822 822 825 834,
u 820 820 821 823,d 818 819 826 829,d 807 807 827 861,u 821 823 823 838,u 815 819 823 827,u 808 808 819 827,d 804 808 816 816,u 812 812 816 819,u 812 812 812 827,d 801 812 816 819,
u 801 808 816 827,d 797 804 823 823,d 819 823 838 849,u 819 823 838 838,u 808 812 819 823,u 797 804 812 812,d 807 808 819 823,d 797 819 830 838,d 819 830 834 849,d 830 834 846 849,
u 822 830 841 841,u 801 804 830 830,d 801 804 815 815,u 812 812 815 815,d 815 816 823 827,d 819 823 841 841,u 819 827 841 841,u 823 826 826 830,u 812 823 826 830,d 817 819 830 834,
d 823 830 830 834,d 830 830 845 845,u 815 823 841 857,u 808 819 823 827,d 812 819 830 834,d 819 834 846 853,d 838 846 868 868,u 842 846 868 868,u 835 839 847 847,d 828 835 843 843,
u 828 832 842 846,u 828 828 832 839,u 824 828 828 831,d 828 831 842 842,u 825 825 842 842,d 825 825 846 846,u 846 846 846 858,d 846 847 850 861,u 842 846 854 854,u 842 842 847 850,
d 839 843 850 850,d 847 854 856 861,u 854 854 854 861,u 842 842 854 857,u 828 831 842 842,u 818 825 831 831,u 825 825 825 829,d 825 825 842 846,d 842 842 850 854,d 840 850 854 854,
u 842 846 854 854,u 839 839 846 846,u 828 828 842 842,u 821 828 828 831,u 821 824 829 829,d 821 825 831 831,u 821 821 831 831,u 817 817 821 828,d 818 818 821 825,d 821 821 825 825,
d 817 824 825 828,d 825 825 829 829,u 828 831 831 836,u 824 828 831 831,u 821 825 825 829,d 825 825 831 835,d 825 831 839 843,u 835 839 839 843,u 825 835 839 839,d 831 835 843 843,
d 835 839 854 854,u 846 850 854 861,u 846 846 850 854,d 843 846 850 850,d 850 854 858 865,u 850 854 858 861,u 846 850 850 858,u 842 846 850 854,u 839 842 850 850,u 828 831 839 839,
u 821 825 831 831,d 817 825 828 828,u 825 828 828 835,d 825 828 831 839,d 828 830 839 839,d 839 839 850 850,d 843 850 858 858,d 854 858 869 877,u 862 865 873 880,d 846 865 873 873,
u 835 839 873 873,u 821 824 838 847,u 818 824 824 825,u 817 821 824 843,d 824 824 828 832,d 824 828 831 836,u 821 824 829 832,u 806 813 824 824,d 810 810 824 824,u 809 817 824 824,
u 783 791 814 814,d 787 791 824 832,u 791 791 824 836,u 783 787 791 791,d 779 787 791 807,d 787 791 817 817,d 806 817 821 832,d 806 820 823 828,d 813 821 836 836,d 828 836 857 865,
d 843 857 861 865,d 858 861 872 876,u 839 839 872 872,d 828 839 872 872,d 872 872 876 884,d 876 876 891 895,u 870 887 891 891,u 832 836 887 887,u 810 825 836 836,d 821 821 832 839,
u 817 817 832 836,u 809 813 817 825,u 791 813 813 817,u 802 806 814 817,u 798 806 806 810,d 802 806 821 821,u 798 817 817 817,u 798 798 817 836,d 787 798 802 802,d 798 802 817 817,
d 809 817 836 836,d 836 836 839 847,u 817 828 839 839,u 821 821 828 843,d 821 821 825 836,u 802 806 821 821,u 783 798 806 806,u 791 802 802 806,u 791 798 802 806,u 791 794 798 814,
d 787 791 806 806,u 772 779 806 806,u 772 783 783 791,u 772 783 783 787,u 779 783 783 787,d 772 783 791 794,u 779 783 791 794,d 779 783 791 794,d 783 791 798 798,d 798 798 802 809,
u 794 798 802 809,u 787 787 798 798,d 787 787 802 813,u 783 787 802 817,u 783 783 787 791,u 768 783 785 798,u 761 764 783 783,d 757 764 779 779,u 761 761 779 779,u 735 739 761 761,
u 720 724 739 747,u 713 720 724 728,d 709 720 735 740,u 702 705 735 735,d 694 705 713 721,d 705 709 719 728,d 717 717 732 765,u 676 687 736 747,u 639 643 687 687,u 616 628 643 653,
u 594 601 628 628,u 587 597 601 609,d 587 597 605 617,u 575 586 605 605,u 546 550 586 594,d 538 546 550 561,u 516 520 550 553,u 490 494 523 531,u 453 482 494 535,d 453 482 490 520,
d 464 486 513 520,d 497 508 557 564,u 494 535 557 562,d 501 535 568 576,u 527 539 568 576,d 478 539 560 564,u 438 438 560 576,u 379 389 438 438,u 328 347 389 397,u 332 336 343 378,
d 310 336 340 344,u 317 332 340 355,d 328 328 367 382,u 351 366 366 389,d 351 366 384 384,u 351 351 384 392,u 332 340 347 365,d 324 340 347 355,d 328 347 373 381`
    .split(',').map(s => s.trim().split(' '));

const AXIS_W = 61, AXIS_H = 16, TOP = 126, BAR = 4.497;
const GREEN = '#4aa845';

// zones : x, y haut, y bas, couleur
const zones = [[179, 183, 264, '#fdddee'], [1496, 538, 590, '#cdecfd'], [1200, 835, 902, '#cdecfd']];

// niveaux : x, y, couleur, épaisseur, pointillés
const levels = [
    [1, 137, '#62b562', 1, '4 3'], [1, 171, '#62b562', 1, '4 3'], [179, 152, '#c02020', 2, '20 8'],
    [179, 224, '#3838d8', 1, '11 11'], [179, 296, GREEN, 2, '20 8'], [179, 329, GREEN, 1, '19 7'],
    [1, 372, '#222', 1, '4 3'],
    [1496, 497, GREEN, 1, '19 7'], [1496, 519, GREEN, 2, '20 8'], [1496, 564, '#5656cc', 2, '11 11'], [1496, 610, '#b81c1c', 2, '20 8'],
    [1200, 782, GREEN, 1, '19 7'], [1200, 809, '#38ac38', 2, '20 8'], [1200, 869, '#5c6cc8', 2, '11 11'], [1200, 928, '#ee1515', 2, '20 8'],
    [1, 494, '#4ab2de', 2, ''], [1, 818, '#6a1a9c', 2, '']
];

// textes : x, ligne de base, libellé, alignement
const labels = [
    [939, 148, '4 594,18'], [853, 167, '4 592,9'], [939, 179, '4 592,08'], [939, 221, '4 589,33'], [939, 261, '4 586,58'],
    [939, 293, '4 584,48'], [939, 326, '4 582,26'], [11, 370, 'Clo M'], [3, 936, 'IT-Finance.com - Temps Réel'],
    [1597, 493, '4 570,93'], [1597, 515, '4 569,52'], [1597, 535, '4 568,18'], [1597, 560, '4 566,43'], [1597, 586, '4 564,68'], [1597, 606, '4 563,34'],
    [1449, 779, '4 551,72'], [1449, 806, '4 549,90'], [1449, 831, '4 548,18'], [1449, 865, '4 545,93'], [1449, 899, '4 543,68'], [1449, 924, '4 541,96'],
    [1735, 490, '9/15h 4 571,18', 'end'], [1735, 814, 'Clo 22h 4 549,34', 'end']
];

function draw() {
    const svg = document.getElementById('plot');
    const W = svg.clientWidth, H = svg.clientHeight;
    const pw = W - AXIS_W, ph = H - AXIS_H;
    const X = v => Math.round((v - 1) * pw / 1737);
    const Y = v => Math.round((v - TOP) * ph / 812);
    let out = '';

    for (const [x, t, b, fill] of zones)
        out += `<rect x="${X(x)}" y="${Y(t)}" width="${pw - X(x)}" height="${Y(b) - Y(t)}" fill="${fill}"/>`;
    out += `<ellipse cx="${X(1547)}" cy="${Y(326)}" rx="54" ry="20" fill="#fde8dc" stroke="#ef9c6c"/>`;

    out += '<g shape-rendering="crispEdges">';
    bars.forEach(([dir, h, t, b, l], i) => {
        const x = X(4.3 + i * BAR), up = dir === 'u';
        const line = up ? '#1f6c92' : '#c04448', fill = up ? '#199fd6' : '#f77174';
        out += `<path d="M${x + .5} ${Y(+h)}V${Y(+l) + 1}" stroke="${line}"/>`;
        out += t === b
            ? `<path d="M${x - 2} ${Y(+t) + .5}h5" stroke="${line}"/>`
            : `<rect x="${x - 1.5}" y="${Y(+t) + .5}" width="4" height="${Y(+b) - Y(+t)}" fill="${fill}" stroke="${line}"/>`;
    });
    for (const [x, t, b] of zones)
        out += `<path d="M${pw} ${Y(t) + .5}H${X(x) + .5}V${Y(b) + .5}H${pw}" fill="none" stroke="#111"/>`;
    for (const [x, y, color, w, dash] of levels)
        out += `<path d="M${X(x)} ${Y(y) + (w === 1 ? .5 : 0)}H${pw}" stroke="${color}" stroke-width="${w}" stroke-dasharray="${dash}"/>`;

    // axes
    out += `<path d="M${pw + .5} 0V${ph + .5}H0" fill="none" stroke="#6d8490"/>`;
    for (let p = 4595; p >= 4545; p -= 5) out += `<path d="M${pw} ${Y(436.500 + (4575 - p) * 14.85) + .5}h5" stroke="#6d8490"/>`;
    for (let i = 0; i < 32; i++) out += `<path d="M${X(49 + i * 53.95) + .5} ${ph}v4" stroke="#6d8490"/>`;
    out += '</g>';

    for (const [x, y, s, anchor] of labels)
        out += `<text x="${X(x)}" y="${Y(y)}" text-anchor="${anchor || 'start'}">${s}</text>`;
    for (let p = 4595; p >= 4545; p -= 5)
        if (p !== 4580) out += `<text x="${pw + 6}" y="${Y(436.500 + (4575 - p) * 14.85) + 4}" ${p === 4550 ? 'font-weight="bold"' : ''}>4 ${p - 4000}</text>`;
    for (let i = 0; i < 32; i++) {
        const h = (13 + i) % 24;
        out += `<text x="${X(49 + i * 53.95)}" y="${ph + 13}" text-anchor="middle" ${h ? '' : 'font-weight="bold"'}>${h ? String(h).padStart(2, '0') + ':00' : '07'}</text>`;
    }

    // prix courant
    const c = Y(349), x = pw + 4;
    out += `<rect x="${x + .5}" y="${c + 23.5}" width="42" height="13" fill="#eef4f7" stroke="#8b9aa1"/><text x="${x + 2}" y="${c + 34}">4 579,32</text>`;
    out += `<rect x="${x}" y="${c + 19}" width="34" height="14" fill="#8fe388"/><text x="${x + 2}" y="${c + 29}">3m01s</text>`;
    out += `<rect x="${x + .5}" y="${c + .5}" width="55" height="18" fill="#f6c915" stroke="#8c7a20"/>`;
    out += `<text x="${x + 2}" y="${c + 15}">4</text><text x="${x + 11}" y="${c + 15}" font-size="15">579,3</text><text x="${x + 49}" y="${c + 10}">2</text>`;
    svg.innerHTML = out;
}

draw();
window.addEventListener('resize', draw);
```
